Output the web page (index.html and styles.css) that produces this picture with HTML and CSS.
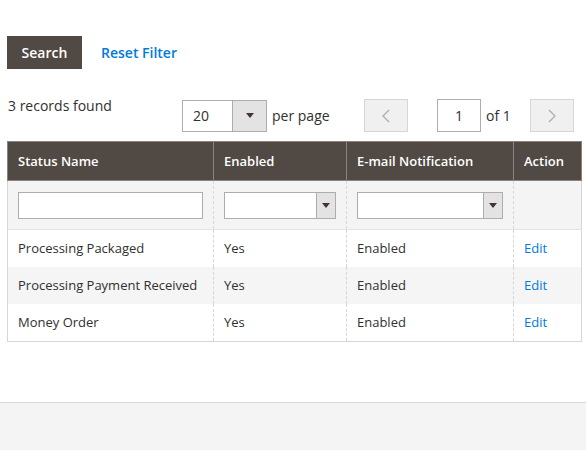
FILE: index.html
```html
<!DOCTYPE html>
<html lang="en">
<head>
    <meta charset="UTF-8">
    <title>Order Statuses</title>
    <link rel="stylesheet" href="styles.css">
</head>
<body>
<div class="page">
    <div class="actions">
        <button class="btn-search">Search</button>
        <a class="reset-link" href="#">Reset Filter</a>
    </div>

    <div class="toolbar">
        <div class="records">3 records found</div>
        <div class="pager">
            <div class="select-limit">
                <span class="limit-value">20</span>
                <span class="select-btn">
                    <svg width="8" height="5" viewBox="0 0 8 5"><polygon points="0,0 8,0 4,5" fill="#41362f"/></svg>
                </span>
            </div>
            <span class="per-page">per page</span>
            <button class="page-btn">
                <svg width="8" height="14" viewBox="0 0 8 14"><polyline points="7,1 1,7 7,13" fill="none" stroke="#adadad" stroke-width="1.3"/></svg>
            </button>
            <input class="page-input" type="text" value="1">
            <span class="of-pages">of 1</span>
            <button class="page-btn">
                <svg width="8" height="14" viewBox="0 0 8 14"><polyline points="1,1 7,7 1,13" fill="none" stroke="#adadad" stroke-width="1.3"/></svg>
            </button>
        </div>
    </div>

    <table class="grid">
        <colgroup>
            <col style="width:206px">
            <col style="width:133px">
            <col style="width:167px">
            <col style="width:68px">
        </colgroup>
        <thead>
        <tr>
            <th>Status Name</th>
            <th>Enabled</th>
            <th>E-mail Notification</th>
            <th>Action</th>
        </tr>
        </thead>
        <tbody>
        <tr class="filters">
            <td><input class="filter-input" type="text"></td>
            <td>
                <div class="filter-select">
                    <span class="fs-btn"><svg width="8" height="5" viewBox="0 0 8 5"><polygon points="0,0 8,0 4,5" fill="#41362f"/></svg></span>
                </div>
            </td>
            <td>
                <div class="filter-select">
                    <span class="fs-btn"><svg width="8" height="5" viewBox="0 0 8 5"><polygon points="0,0 8,0 4,5" fill="#41362f"/></svg></span>
                </div>
            </td>
            <td></td>
        </tr>
        <tr class="first">
            <td>Processing Packaged</td>
            <td>Yes</td>
            <td>Enabled</td>
            <td><a class="edit-link" href="#">Edit</a></td>
        </tr>
        <tr class="even">
            <td>Processing Payment Received</td>
            <td>Yes</td>
            <td>Enabled</td>
            <td><a class="edit-link" href="#">Edit</a></td>
        </tr>
        <tr>
            <td>Money Order</td>
            <td>Yes</td>
            <td>Enabled</td>
            <td><a class="edit-link" href="#">Edit</a></td>
        </tr>
        </tbody>
    </table>
</div>
<div class="page-footer"></div>
</body>
</html>
```

FILE: styles.css
```css
body {
    margin: 0;
    font-family: "Open Sans", "Liberation Sans", sans-serif;
    font-size: 14px;
    color: #303030;
    background: #fff;
}
.page {
    height: 402px;
    padding: 36px 5px 0 7px;
    box-sizing: border-box;
}
.page-footer {
    height: 48px;
    border-top: 1px solid #d6d6d6;
    background: #f4f4f4;
}

/* search / reset */
.actions {
    display: flex;
    align-items: center;
}
.btn-search {
    width: 75px;
    height: 33px;
    padding: 0;
    background: #514943;
    border: 1px solid #514943;
    color: #fff;
    font-family: inherit;
    font-size: 14px;
    font-weight: 600;
    cursor: pointer;
}
.reset-link {
    margin-left: 19px;
    color: #007bdb;
    font-weight: 600;
    text-decoration: none;
}

/* records + pager */
.toolbar {
    display: flex;
    align-items: flex-start;
    margin-top: 26px;
}
.records {
    width: 174px;
    padding: 1px 0 0 1px;
    line-height: 19px;
}
.pager {
    display: flex;
    align-items: center;
    margin-top: 4px;
    height: 33px;
}
.select-limit {
    display: flex;
    width: 85px;
    height: 32px;
    border: 1px solid #adadad;
    box-sizing: border-box;
    background: #fff;
}
.limit-value {
    flex: 1;
    padding-left: 10px;
    line-height: 30px;
}
.select-btn {
    width: 33px;
    display: flex;
    align-items: center;
    justify-content: center;
    background: #e3e3e3;
    border-left: 1px solid #adadad;
}
.per-page {
    width: 92px;
    margin-left: 5px;
}
.page-btn {
    width: 44px;
    height: 33px;
    padding: 0;
    display: flex;
    align-items: center;
    justify-content: center;
    background: #f0f0f0;
    border: 1px solid #d6d6d6;
    box-sizing: border-box;
}
.page-input {
    width: 44px;
    height: 33px;
    margin-left: 29px;
    padding: 0;
    border: 1px solid #adadad;
    box-sizing: border-box;
    font-family: inherit;
    font-size: 14px;
    color: #303030;
    text-align: center;
}
.of-pages {
    width: 44px;
    margin-left: 5px;
}

/* grid */
.grid {
    width: 574px;
    margin-top: 9px;
    border-collapse: collapse;
    table-layout: fixed;
    font-size: 13px;
    border: 1px solid #d6d6d6;
}
.grid th {
    padding: 10px;
    line-height: 18px;
    background: #514943;
    color: #fff;
    font-weight: 600;
    text-align: left;
    border: 1px solid #8a837f;
}
.grid td {
    padding: 10px;
    line-height: 17px;
    border-left: 1px dashed #d6d6d6;
    border-right: 1px dashed #d6d6d6;
}
.grid .filters td {
    padding: 11px 10px 10px;
    background: #f4f4f4;
    line-height: 0;
}
.grid tr.first td {
    border-top: 1px solid #e3e3e3;
}
.grid tr.even td {
    background: #f5f5f5;
}
.filter-input {
    width: 100%;
    height: 27px;
    margin: 0;
    border: 1px solid #adadad;
    box-sizing: border-box;
    background: #fff;
}
.filter-select {
    display: flex;
    justify-content: flex-end;
    height: 27px;
    border: 1px solid #adadad;
    box-sizing: border-box;
    background: #fff;
}
.fs-btn {
    width: 18px;
    display: flex;
    align-items: center;
    justify-content: center;
    background: #e3e3e3;
    border-left: 1px solid #adadad;
}
.edit-link {
    color: #007bdb;
    text-decoration: none;
}
```
